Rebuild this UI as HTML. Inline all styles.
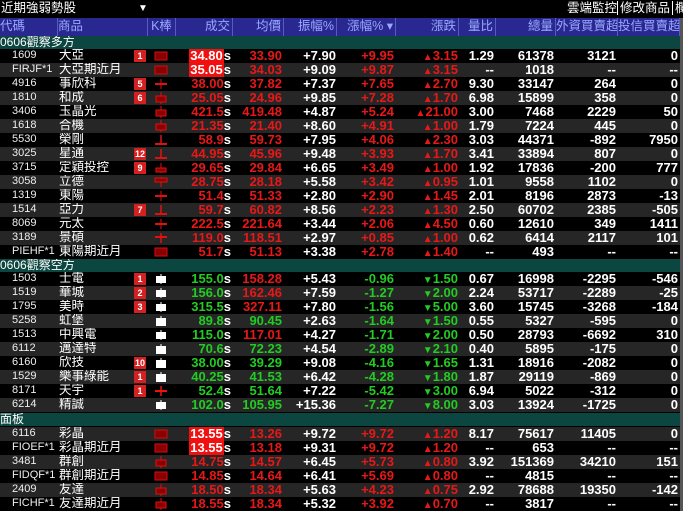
<!DOCTYPE html>
<html><head><meta charset="utf-8"><style>
*{margin:0;padding:0;box-sizing:border-box}
body{width:683px;height:511px;background:#000;overflow:hidden;font-family:"Liberation Sans","WenQuanYi Zen Hei",sans-serif;color:#fff;position:relative}
#top{position:absolute;left:0;top:0;width:683px;height:18px;background:#000;font-size:13px;line-height:18px;overflow:hidden}
#top .t{position:absolute;left:1px;top:0;font-family:"WenQuanYi Zen Hei",sans-serif;font-size:12.5px;line-height:17px}
#top .dd{position:absolute;left:138px;top:0;font-size:10px}
#top .r{position:absolute;left:567px;top:0;font-family:"WenQuanYi Zen Hei",sans-serif;font-size:12.5px;white-space:nowrap;line-height:17px}
#top .r span{border-left:1px solid #fff;padding:0 2px}
.row{position:absolute;left:0;width:680px;height:14px;overflow:hidden}
.row div{position:absolute;top:0;height:14px;line-height:14px;white-space:nowrap;overflow:hidden;font-size:13px;font-weight:bold;text-align:right}
.hd{top:18px;height:18px;background:#282890}
.hd div{height:18px!important;line-height:17px!important;color:#9aa8ff;font-weight:normal!important;font-family:"WenQuanYi Zen Hei",sans-serif;font-size:12.5px!important;border-right:1px solid #5a5ac0;padding-right:2px}
.g{height:13px;background:#0c4640;font-family:"WenQuanYi Zen Hei",sans-serif;font-size:12px;line-height:12px;padding-left:0}
.b{background:#000}.a{background:#262626}
.row div.c{text-align:left;padding-left:12px;font-weight:normal;font-size:11px;line-height:13px;color:#eee}
.row div.n{text-align:left;padding-left:1px;font-weight:normal;font-family:"WenQuanYi Zen Hei",sans-serif;font-size:12.5px;line-height:13px}
.bd{position:absolute;left:134px;top:1px;width:12px;height:12px;background:#d42020;color:#fff;font-size:9px;line-height:12px;text-align:center;font-weight:bold}
.kk{position:absolute;left:154px;top:1px}
.R{color:#e81818}.G{color:#22cc22}
.hl{background:#f01010;color:#fff;padding:0 1px}
.s{color:#fff}
#sb{position:absolute;left:680px;top:18px;width:3px;height:493px;background:#555}
</style></head><body>
<div id="top"><span class="t">近期強弱勢股</span><span class="dd">▼</span><span class="r">雲端監控<span>修改商品</span><span>欄</span></span></div>
<div id="wrap"></div>
<div id="sb"></div>
<script>
const ic={
F:'<rect x="1" y="2" width="12" height="8" fill="#8a0000" stroke="#d01010"/>',
H:'<line x1="7" y1="0" x2="7" y2="12" stroke="#e01010"/><rect x="2" y="4" width="10" height="6" fill="#8a0000" stroke="#e01010"/>',
C:'<line x1="7" y1="1" x2="7" y2="11" stroke="#e01010"/><rect x="1" y="5" width="12" height="2" fill="#e01010"/>',
T:'<line x1="7" y1="1" x2="7" y2="9" stroke="#e01010" stroke-width="1.5"/><rect x="1" y="9" width="12" height="2" fill="#e01010"/>',
B:'<line x1="7" y1="1" x2="7" y2="11" stroke="#e01010"/><rect x="2" y="6" width="10" height="4" fill="#8a0000" stroke="#e01010"/>',
D:'<line x1="7" y1="1" x2="7" y2="11" stroke="#e01010"/><rect x="1" y="2" width="12" height="4" fill="#8a0000" stroke="#e01010"/>',
P:'<line x1="7" y1="1" x2="7" y2="11" stroke="#e01010" stroke-width="1.5"/><rect x="1" y="4" width="12" height="2" fill="#e01010"/>',
W:'<line x1="7" y1="1" x2="7" y2="11" stroke="#fff"/><rect x="2" y="3" width="10" height="7" fill="#fff"/>',
X:'<rect x="2" y="3" width="10" height="8" fill="#fff"/><line x1="7" y1="1" x2="7" y2="3" stroke="#fff"/>',
Q:'<line x1="7" y1="1" x2="7" y2="11" stroke="#f01010" stroke-width="1.5"/><rect x="1" y="5" width="12" height="2" fill="#f01010"/>'};
const g1=[
['1609','大亞','1','F','34.80','h','33.90','R','+7.90','+9.95','3.15','1.29','61378','3121','0'],
['FIRJF*1','大亞期近月','','F','35.05','h','34.03','R','+9.09','+9.87','3.15','--','1018','--','--'],
['4916','事欣科','5','C','38.00','R','37.82','R','+7.37','+7.65','2.70','9.30','33147','264','0'],
['1810','和成','6','H','25.05','R','24.96','R','+9.85','+7.28','1.70','6.98','15899','358','0'],
['3406','玉晶光','','H','421.5','R','419.48','R','+4.87','+5.24','21.00','3.00','7468','2229','50'],
['1618','合機','','H','21.35','R','21.40','R','+8.60','+4.91','1.00','1.79','7224','445','0'],
['5530','榮剛','','T','58.9','R','59.73','R','+7.95','+4.06','2.30','3.03','44371','-892','7950'],
['3025','星通','12','T','44.95','R','45.96','R','+9.48','+3.93','1.70','3.41','33894','807','0'],
['3715','定穎投控','9','B','29.65','R','29.84','R','+6.65','+3.49','1.00','1.92','17836','-200','777'],
['3058','立德','','D','28.75','R','28.18','R','+5.58','+3.42','0.95','1.01','9558','1102','0'],
['1319','東陽','','C','51.4','R','51.33','R','+2.80','+2.90','1.45','2.01','8196','2873','-13'],
['1514','亞力','7','T','59.7','R','60.82','R','+8.56','+2.23','1.30','2.50','60702','2385','-505'],
['8069','元太','','C','222.5','R','221.64','R','+3.44','+2.06','4.50','0.60','12610','349','1411'],
['3189','景碩','','P','119.0','R','118.51','R','+2.97','+0.85','1.00','0.62','6414','2117','101'],
['PIEHF*1','東陽期近月','','F','51.7','R','51.13','R','+3.38','+2.78','1.40','--','493','--','--']];
const g2=[
['1503','士電','1','W','155.0','G','158.28','R','+5.43','-0.96','1.50','0.67','16998','-2295','-546'],
['1519','華城','2','W','156.0','G','162.46','R','+7.59','-1.27','2.00','2.24','53717','-2289','-25'],
['1795','美時','3','W','315.5','G','327.11','R','+7.80','-1.56','5.00','3.60','15745','-3268','-184'],
['5258','虹堡','','X','89.8','G','90.45','G','+2.63','-1.64','1.50','0.55','5327','-595','0'],
['1513','中興電','','W','115.0','G','117.01','R','+4.27','-1.71','2.00','0.50','28793','-6692','310'],
['6112','邁達特','','X','70.6','G','72.23','G','+4.54','-2.89','2.10','0.40','5895','-175','0'],
['6160','欣技','10','X','38.00','G','39.29','G','+9.08','-4.16','1.65','1.31','18916','-2082','0'],
['1529','樂事綠能','1','X','40.25','G','41.53','G','+6.42','-4.28','1.80','1.87','29119','-869','0'],
['8171','天宇','1','Q','52.4','G','51.64','G','+7.22','-5.42','3.00','6.94','5022','-312','0'],
['6214','精誠','','W','102.0','G','105.95','G','+15.36','-7.27','8.00','3.03','13924','-1725','0']];
const g3=[
['6116','彩晶','','F','13.55','h','13.26','R','+9.72','+9.72','1.20','8.17','75617','11405','0'],
['FIOEF*1','彩晶期近月','','F','13.55','h','13.18','R','+9.31','+9.72','1.20','--','653','--','--'],
['3481','群創','','H','14.75','R','14.57','R','+6.45','+5.73','0.80','3.92','151369','34210','151'],
['FIDQF*1','群創期近月','','F','14.85','R','14.64','R','+6.41','+5.69','0.80','--','4815','--','--'],
['2409','友達','','H','18.50','R','18.34','R','+5.63','+4.23','0.75','2.92','78688','19350','-142'],
['FICHF*1','友達期近月','','H','18.55','R','18.34','R','+5.32','+3.92','0.70','--','3817','--','--']];
const E={p:231,a:282,z:336,f:394,d:458,v:494,t:554,w:616,x:678};
function cell(right,w,cls,html){return '<div class="'+cls+'" style="left:'+(right-w)+'px;width:'+w+'px">'+html+'</div>';}
let y=36,H='';
H+='<div class="row hd" style="top:18px;height:18px">'+
'<div style="left:0;width:58px;text-align:left">代碼</div><div style="left:58px;width:90px;text-align:left">商品</div><div style="left:148px;width:28px;text-align:center;padding:0">K棒</div>'+
'<div style="left:176px;width:57px">成交</div><div style="left:233px;width:51px">均價</div><div style="left:284px;width:53px">振幅%</div><div style="left:337px;width:59px">漲幅% ▾</div><div style="left:396px;width:63px">漲跌</div><div style="left:459px;width:37px">量比</div><div style="left:496px;width:60px">總量</div><div style="left:556px;width:62px">外資買賣超</div><div style="left:618px;width:62px">投信買賣超</div></div>';
function grp(t){H+='<div class="row g" style="top:'+y+'px">'+t+'</div>';y+=13;}
function rows(arr,start){arr.forEach((r,i)=>{const cls=((i+start)%2)?'a':'b';const up=r[9][0]=='+';const cc=up?'R':'G';
const pr=(r[5]=='h'?'<span class="hl">'+r[4]+'</span>':'<span class="'+r[5]+'">'+r[4]+'</span>')+'<span class="s">s</span>';
let h='<div class="row '+cls+'" style="top:'+y+'px">';
h+='<div class="c" style="left:0;width:58px">'+r[0]+'</div><div class="n" style="left:58px;width:76px">'+r[1]+'</div>';
if(r[2])h+='<span class="bd">'+r[2]+'</span>';
h+='<svg class="kk" width="14" height="12">'+ic[r[3]]+'</svg>';
h+=cell(E.p,56,'',pr)+cell(E.a,50,r[7],r[6])+cell(E.z,52,'',r[8])+cell(E.f,56,cc,r[9])+cell(E.d,62,cc,'<span style="font-size:10px">'+(up?'▲':'▼')+'</span>'+r[10])+cell(E.v,36,'',r[11])+cell(E.t,58,'',r[12])+cell(E.w,60,'',r[13])+cell(E.x,60,'',r[14]);
h+='</div>';H+=h;y+=14;});}
grp('0606觀察多方');rows(g1,0);grp('0606觀察空方');rows(g2,0);y=413;grp('面板');y=427;rows(g3,1);
document.getElementById('wrap').innerHTML=H;
</script>
</body></html>
